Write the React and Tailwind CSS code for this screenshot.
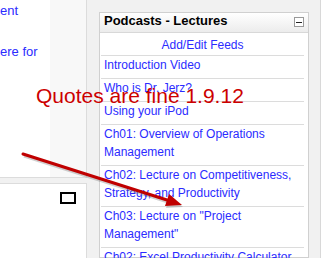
const links = [
  ['Introduction Video'],
  ['Who is Dr. Jerz?'],
  ['Using your iPod'],
  ['Ch01: Overview of Operations', 'Management'],
  ['Ch02: Lecture on Competitiveness,', 'Strategy, and Productivity'],
  ['Ch03: Lecture on "Project', 'Management"'],
  ['Ch02: Excel Productivity Calculator'],
];

function FeedBlock() {
  return (
    <div className="mt-[12px] w-[210px] shrink-0 border border-[#d0d0d0] bg-white">
      <div className="flex h-[20px] items-start justify-between border-b border-[#d8d8d8] bg-gradient-to-b from-white to-[#ececec] pl-[4px] pr-[4px]">
        <h2 className="pb-[4px] text-[13px] font-bold leading-[15px] text-black">Podcasts - Lectures</h2>
        <span className="mt-[4px] flex h-[10px] w-[10px] items-center justify-center border border-[#999] bg-white">
          <span className="h-[1px] w-[6px] bg-[#222]" />
        </span>
      </div>
      <div className="ml-[1px] mr-[4px] text-[12px] leading-[18px] text-[#2b2bff]">
        <div className="pt-[3px] pb-[1px] text-center">Add/Edit Feeds</div>
        {links.map((lines, i) => (
          <div key={i} className="border-t border-[#dcdcdc] pb-[4px] pl-[3px]">
            {lines.map((l) => (
              <div key={l}>{l}</div>
            ))}
          </div>
        ))}
      </div>
    </div>
  );
}

export default function App() {
  return (
    <div className="relative flex h-[258px] w-[323px] overflow-hidden bg-[#f1f1f1] font-['Liberation_Sans',Arial,sans-serif]">
      <div className="flex w-[87px] shrink-0 flex-col">
        <div className="h-[178px] border-r border-b border-[#dcdcdc] bg-[linear-gradient(to_right,#fff_50px,#f8f8f8_50px)] text-[13px] text-[#2b2bff]">
          <div className="pt-[2px] leading-[18px]">ent</div>
          <div className="pt-[23px] leading-[18px]">ere for</div>
        </div>
        <div className="mt-[5px] flex flex-1 justify-end border-t border-r border-[#dcdcdc] bg-white pt-[8px] pr-[10px]">
          <span className="h-[12px] w-[16px] border-2 border-black" />
        </div>
      </div>
      <div className="ml-[12px] flex">
        <FeedBlock />
      </div>
      <div className="ml-[11px] flex-1 border-l border-[#d8d8d8] bg-white" />

      {/* annotation drawn over the screenshot */}
      <div className="absolute left-[36px] top-[85px] text-[21px] leading-[21px] text-[#cc0000]">
        Quotes are fine 1.9.12
      </div>
      <svg className="absolute left-0 top-0" width="323" height="258" viewBox="0 0 323 258">
        <line x1="24" y1="156" x2="168" y2="202" stroke="#777" strokeOpacity="0.35" strokeWidth="3" />
        <polygon points="183,207 166,208 170,196" fill="#777" fillOpacity="0.35" />
        <line x1="23" y1="154" x2="167" y2="200" stroke="#c00000" strokeWidth="3" strokeLinecap="round" />
        <polygon points="182,205 165,206 169,194" fill="#c00000" />
      </svg>
    </div>
  );
}
